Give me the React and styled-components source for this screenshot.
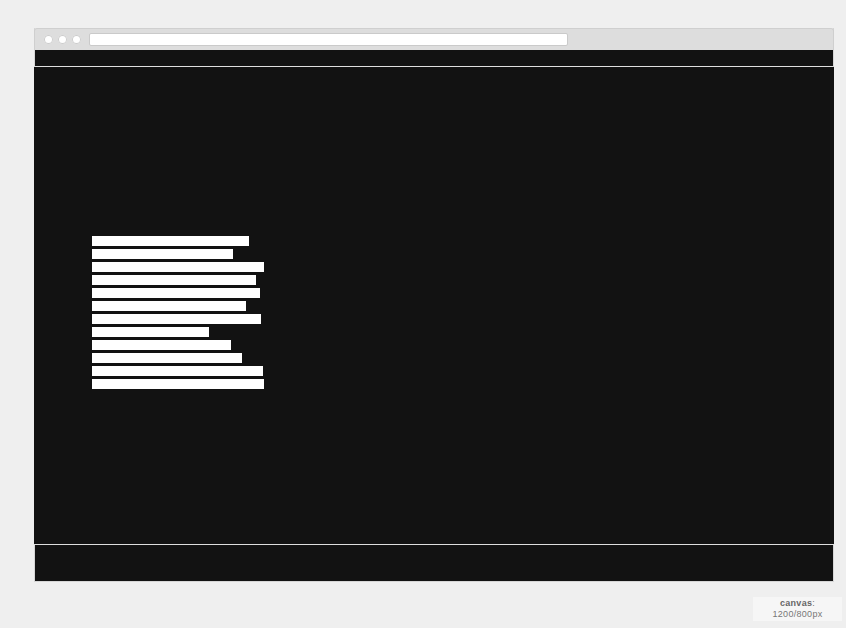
import React from "react";
import styled, { createGlobalStyle } from "styled-components";

const lines = [157, 141, 172, 164, 168, 154, 169, 117, 139, 150, 171, 172];

const Global = createGlobalStyle`
  html, body {
    margin: 0;
    padding: 0;
    background: #efefef;
    font-family: "Liberation Sans", Arial, sans-serif;
  }
`;

const Page = styled.div`
  width: 846px;
  height: 628px;
  padding: 28px 0 0 34px;
  box-sizing: border-box;
  position: relative;
  overflow: hidden;
`;

const Frame = styled.div`
  width: 800px;
  display: flex;
  flex-direction: column;
  border: 1px solid #d6d6d6;
  border-top: none;
  box-sizing: border-box;
`;

const Toolbar = styled.div`
  height: 22px;
  margin: 0 -1px;
  display: flex;
  align-items: center;
  gap: 5px;
  padding: 0 0 0 9px;
  background: #dddddd;
  border: 1px solid #cfcfcf;
  border-bottom: none;
  border-radius: 3px 3px 0 0;
  box-sizing: border-box;
`;

const Dot = styled.span`
  width: 9px;
  height: 9px;
  border-radius: 50%;
  background: #ffffff;
  box-shadow: inset 0 0 0 1px #cccccc;
`;

const UrlBar = styled.div`
  width: 479px;
  height: 13px;
  margin-left: 3px;
  background: #ffffff;
  border: 1px solid #cacaca;
  border-radius: 2px;
  box-sizing: border-box;
`;

const Header = styled.div`
  height: 16px;
  background: #121212;
  border-bottom: 1px solid #dedede;
`;

const Main = styled.div`
  height: 478px;
  margin: 0 -1px;
  background: #121212;
  border-bottom: 1px solid #dedede;
  box-sizing: border-box;
  padding: 169px 0 0 58px;
  display: flex;
  flex-direction: column;
  gap: 3px;
`;

const Line = styled.div`
  height: 10px;
  background: #ffffff;
`;

const Footer = styled.div`
  height: 36px;
  background: #121212;
`;

const CanvasBadge = styled.div`
  position: absolute;
  right: 4px;
  bottom: 7px;
  width: 89px;
  height: 24px;
  background: #f6f6f6;
  color: #777777;
  font-size: 9px;
  line-height: 11px;
  text-align: center;
  padding-top: 1px;
  box-sizing: border-box;
  letter-spacing: 0.3px;
  b {
    font-weight: bold;
    color: #666666;
  }
`;

export default function App() {
  return (
    <Page>
      <Global />
      <Frame>
        <Toolbar>
          <Dot />
          <Dot />
          <Dot />
          <UrlBar />
        </Toolbar>
        <Header />
        <Main>
          {lines.map((w, i) => (
            <Line key={i} style={{ width: w }} />
          ))}
        </Main>
        <Footer />
      </Frame>
      <CanvasBadge>
        <b>canvas</b>:
        <br />
        1200/800px
      </CanvasBadge>
    </Page>
  );
}
